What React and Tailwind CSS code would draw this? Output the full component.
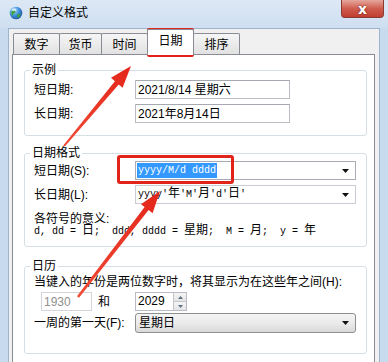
import React from 'react'

const cjk = "font-['Liberation_Sans','Noto_Sans_CJK_SC',sans-serif]"
const mono = "font-['Liberation_Mono','Noto_Sans_CJK_SC',monospace]"

function Tab({ label, width, selected, first }) {
  return (
    <div
      className={`flex items-center justify-center border border-b-0 border-[#898c95] rounded-t-[2px] text-[12px] leading-[16px] text-black ${
        first ? '' : '-ml-px'
      } ${
        selected
          ? 'relative z-10 h-[26px] -mb-px bg-white pb-[3px]'
          : 'h-[21px] pt-[2px] bg-gradient-to-b from-[#f6f6f6] to-[#e1e1e1]'
      } ${width}`}
    >
      {label}
    </div>
  )
}

function TextBox({ children, className = '' }) {
  return (
    <div
      className={`flex items-center h-[19px] border border-[#b9bcc4] border-t-[#a6a9b1] bg-white pl-[2px] text-[12px] leading-[16px] text-black ${className}`}
    >
      {children}
    </div>
  )
}

function DropArrow() {
  return (
    <svg width="7" height="4" viewBox="0 0 7 4" className="shrink-0">
      <path d="M0 0h7L3.5 4z" fill="#111" />
    </svg>
  )
}

function Group({ title, children, className = '' }) {
  return (
    <fieldset className={`border border-[#d5dfe5] rounded-[3px] px-[9px] ${className}`}>
      <legend className="ml-[-4px] px-[2px] text-[12px] leading-[16px] text-black">{title}</legend>
      {children}
    </fieldset>
  )
}

function Arrows() {
  return (
    <svg width="388" height="362" viewBox="0 0 388 362" className="absolute inset-0 pointer-events-none">
      <defs>
        <linearGradient id="ar1" x1="64" y1="146" x2="131" y2="66" gradientUnits="userSpaceOnUse">
          <stop offset="0" stopColor="#f04a35" />
          <stop offset="1" stopColor="#e3261a" />
        </linearGradient>
        <linearGradient id="ar2" x1="78" y1="297" x2="160" y2="191" gradientUnits="userSpaceOnUse">
          <stop offset="0" stopColor="#f04a35" />
          <stop offset="1" stopColor="#e3261a" />
        </linearGradient>
      </defs>
      <polygon
        points="64.8,146.6 118.7,84.4 122.6,87.8 131,66 111,77.8 114.9,81.2 63.2,145.4"
        fill="url(#ar1)"
      />
      <polygon
        points="79,297.7 148.6,209.9 152.6,213.2 160,191 141,204.2 144.6,206.9 77,296.3"
        fill="url(#ar2)"
      />
    </svg>
  )
}

export default function App() {
  return (
    <div className={`relative w-[388px] h-[362px] overflow-hidden flex flex-col bg-[#c7daee] ${cjk}`}>
      {/* title bar */}
      <div className="h-[28px] shrink-0 flex items-start bg-gradient-to-b from-[#dde8f5] to-[#cfdff1]">
        <div className="flex items-center h-[26px] pl-[9px]">
          <svg width="14" height="14" viewBox="0 0 14 14">
            <defs>
              <radialGradient id="gl" cx="0.35" cy="0.3" r="0.8">
                <stop offset="0" stopColor="#bfe3ff" />
                <stop offset="0.5" stopColor="#3c8fd8" />
                <stop offset="1" stopColor="#1c4f9a" />
              </radialGradient>
            </defs>
            <circle cx="7" cy="7" r="6.3" fill="url(#gl)" />
            <path d="M3 5c1.5-1 3-.5 3.5.8.3 1-.8 1.6-1.8 1.8-1 .2-1.3 1.5-.6 2.6C2.6 9.6 1.6 7 3 5z" fill="#3ea33a" />
            <path d="M8.5 8.2c1-.6 2.6-.3 3.2.5-.4 1.6-1.6 2.8-3 3.2.2-1.2-.9-2.6-.2-3.7z" fill="#3ea33a" />
            <ellipse cx="5" cy="3.8" rx="2.4" ry="1.2" fill="#fff" opacity="0.55" />
          </svg>
          <span className="ml-[5px] text-[12px] leading-[16px] text-black">自定义格式</span>
        </div>
        <div className="ml-auto mr-[4px] w-[43px] h-[18px] flex items-center justify-center rounded-b-[4px] border border-t-0 border-[#8d3a31] bg-gradient-to-b from-[#e4a79d] via-[#cf5c4f] to-[#bf3f31]">
          <span className="text-white font-bold text-[14px] leading-[14px] [text-shadow:0_0_2px_#6a1c14] font-['DejaVu_Sans',sans-serif]">x</span>
        </div>
      </div>

      {/* client */}
      <div className="flex-1 flex mx-[8px] min-h-0">
        <div className="flex-1 flex flex-col border border-b-0 border-[#9fb3cb] bg-[#f0f0f0] pl-[3px] pr-[4px]">
          <div className="h-[25px] shrink-0 flex items-end pl-[1px]">
            <Tab label="数字" width="w-[47px]" first />
            <Tab label="货币" width="w-[43px]" />
            <Tab label="时间" width="w-[47px]" />
            <Tab label="日期" width="w-[47px]" selected />
            <Tab label="排序" width="w-[47px]" />
          </div>

          <div className="flex-1 min-h-0 border border-b-0 border-[#898c95] bg-white pt-[7px] pl-[11px] pr-[7px] overflow-hidden">
            <Group title="示例">
              <div className="mt-[2px] flex flex-col gap-[5px] pb-[12px]">
                <div className="flex items-center">
                  <span className="w-[101px] text-[12px] leading-[16px] text-black">短日期:</span>
                  <TextBox className="w-[155px]">2021/8/14 星期六</TextBox>
                </div>
                <div className="flex items-center">
                  <span className="w-[101px] text-[12px] leading-[16px] text-black">长日期:</span>
                  <TextBox className="w-[155px]">2021年8月14日</TextBox>
                </div>
              </div>
            </Group>

            <Group title="日期格式" className="mt-[9px]">
              <div className="flex flex-col gap-[5px]">
                <div className="flex items-center">
                  <span className="w-[101px] text-[12px] leading-[16px] text-black">短日期(S):</span>
                  <div className="w-[221px] h-[19px] flex items-center border border-[#a9acb4] bg-white pl-[1px] pr-[6px]">
                    <span className={`bg-[#3399ff] text-white text-[10px] leading-[15px] px-[1px] ${mono}`}>yyyy/M/d dddd</span>
                    <span className="ml-auto"><DropArrow /></span>
                  </div>
                </div>
                <div className="flex items-center">
                  <span className="w-[101px] text-[12px] leading-[16px] text-black">长日期(L):</span>
                  <div className="w-[221px] h-[19px] flex items-center border border-[#c9ccd3] bg-white pl-[2px] pr-[6px]">
                    <span className={`text-black text-[10px] leading-[15px] whitespace-pre ${mono}`}>
                      yyyy'<span className="text-[12px]">年</span>'M'<span className="text-[12px]">月</span>'d'<span className="text-[12px]">日</span>'
                    </span>
                    <span className="ml-auto"><DropArrow /></span>
                  </div>
                </div>
              </div>
              <div className="mt-[9px] pb-[8px] text-black">
                <div className="text-[12px] leading-[12px]">各符号的意义:</div>
                <div className={`text-[10px] leading-[12px] whitespace-pre ${mono}`}>
                  d, dd = <span className="text-[12px]">日</span>;  ddd, dddd = <span className="text-[12px]">星期</span>;  M = <span className="text-[12px]">月</span>;  y = <span className="text-[12px]">年</span>
                </div>
              </div>
            </Group>

            <Group title="日历" className="mt-[11px]">
              <div className="text-[12px] leading-[16px] text-black">当键入的年份是两位数字时，将其显示为在这些年之间(H):</div>
              <div className="mt-[2px] flex items-center">
                <div className="w-[101px] flex items-center">
                  <TextBox className="ml-[7px] w-[51px] !border-[#d3d5da] !text-[#8f8f8f]">1930</TextBox>
                  <span className="ml-[6px] text-[12px] leading-[16px] text-black">和</span>
                </div>
                <div className="w-[52px] h-[19px] flex border border-[#b9bcc4] bg-white">
                  <span className="flex-1 pl-[2px] text-[12px] leading-[17px] text-black">2029</span>
                  <div className="w-[13px] flex flex-col border-l border-[#c4c6cc]">
                    <div className="flex-1 flex items-center justify-center bg-gradient-to-b from-[#f5f5f5] to-[#e4e4e4] border-b border-[#c4c6cc]">
                      <svg width="5" height="3" viewBox="0 0 5 3"><path d="M0 3h5L2.5 0z" fill="#5d6f86" /></svg>
                    </div>
                    <div className="flex-1 flex items-center justify-center bg-gradient-to-b from-[#f5f5f5] to-[#e4e4e4]">
                      <svg width="5" height="3" viewBox="0 0 5 3"><path d="M0 0h5L2.5 3z" fill="#5d6f86" /></svg>
                    </div>
                  </div>
                </div>
              </div>
              <div className="mt-[2px] flex items-center pb-[20px]">
                <span className="w-[101px] text-[12px] leading-[16px] text-black">一周的第一天(F):</span>
                <div className="w-[221px] h-[20px] flex items-center rounded-[3px] border border-[#8e8f8f] bg-gradient-to-b from-[#f4f4f4] via-[#ebebeb] to-[#d9d9d9] pl-[3px] pr-[6px]">
                  <span className="text-[12px] leading-[16px] text-black">星期日</span>
                  <span className="ml-auto"><DropArrow /></span>
                </div>
              </div>
            </Group>
          </div>
        </div>
      </div>

      {/* annotations */}
      <div className="absolute left-[147px] top-[28px] w-[47px] h-[29px] border-[3px] border-[#e2231a] rounded-[2px] pointer-events-none" />
      <div className="absolute left-[117px] top-[155px] w-[117px] h-[29px] border-[3px] border-[#e2231a] rounded-[3px] pointer-events-none" />
      <Arrows />
    </div>
  )
}
